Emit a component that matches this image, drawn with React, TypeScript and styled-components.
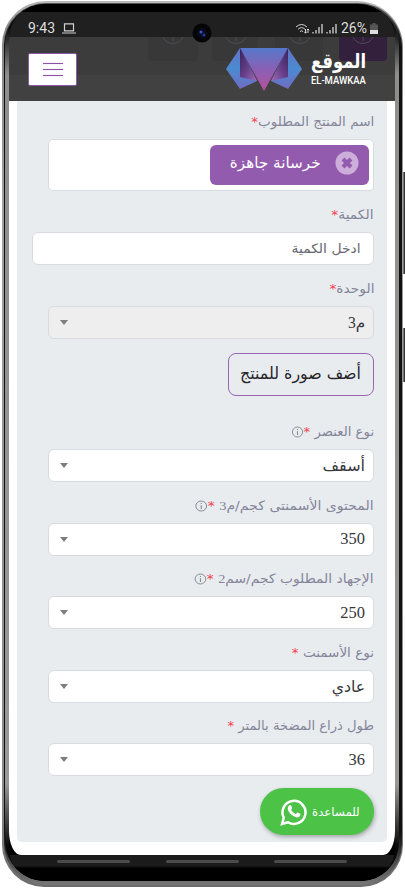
import React from "react";
import styled, { createGlobalStyle } from "styled-components";

const GlobalStyle = createGlobalStyle`
  * { box-sizing: border-box; }
  html, body { margin: 0; background: #fff; }
  body { width: 405px; height: 888px; overflow: hidden; font-family: "DejaVu Sans", sans-serif; }
`;

const Stage = styled.div`
  position: relative;
  width: 405px;
  height: 888px;
  padding: 1px 2px 1px 2px;
  overflow: hidden;
`;
const SideKey = styled.i<{ $top: number; $height: number }>`
  position: absolute;
  right: 0;
  top: ${(p) => p.$top}px;
  width: 3px;
  height: ${(p) => p.$height}px;
  background: #77777a;
  border-right: 1px solid #333;
`;
const Shell = styled.div`
  position: relative;
  height: 886px;
  padding: 2px 1px 2px 2px;
  border-radius: 44px 46px 42px 42px;
  background: linear-gradient(180deg, #b9bab9 0, #858585 30px, #a0a0a0 200px, #888 800px, #6c6c6c 100%);
`;
const Rim = styled.div`
  height: 100%;
  padding: 1px 3px 4px 1px;
  border-radius: 42px 44px 41px 41px;
  background: linear-gradient(180deg, #555 0, #111 40px, #111 830px, #656565 872px, #777 100%);
`;
const Bezel = styled.div`
  height: 100%;
  padding: 0 4px;
  border-radius: 41px 42px 38px 40px;
  background: linear-gradient(180deg, #000 0, #000 20px, #8e8e8c 70px, #999896 780px, #080808 842px);
  overflow: hidden;
`;
const Screen = styled.div`
  display: flex;
  flex-direction: column;
  height: 100%;
  background: #000;
  border-radius: 34px 34px 32px 32px;
  overflow: hidden;
`;

const StatusBar = styled.div`
  display: flex;
  justify-content: space-between;
  align-items: flex-end;
  flex: none;
  height: 33px;
  padding: 0 17px 0 19px;
  border-top: 8px solid #000;
  background: #202020;
  color: #dedede;
  font: 14px/18px Roboto, sans-serif;
  direction: ltr;
`;
const StatusGroup = styled.div<{ $gap: number }>`
  display: flex;
  align-items: center;
  gap: ${(p) => p.$gap}px;
`;
const Camera = styled.svg`
  position: absolute;
  left: 190px;
  top: 21px;
`;
const Header = styled.header`
  position: relative;
  display: flex;
  justify-content: space-between;
  flex: none;
  height: 64px;
  padding: 16px 29px 0 19px;
  background: linear-gradient(#3c3c3c 0 38px, #414141 38px 100%);
  overflow: hidden;
`;
const Ghosts = styled.svg`
  position: absolute;
  left: 0;
  top: 0;
`;
const MenuButton = styled.button`
  position: relative;
  display: flex;
  flex-direction: column;
  align-items: center;
  justify-content: center;
  gap: 5px;
  width: 49px;
  height: 33px;
  padding: 0;
  border: 1px solid #8c59ad;
  border-radius: 2px;
  background: #fff;
`;
const MenuLine = styled.i`
  width: 20px;
  height: 1px;
  background: #8b55a4;
  box-shadow: 0 0 1px #b98ad0;
`;
const Brand = styled.div`
  position: relative;
  display: flex;
  gap: 10px;
  margin-top: -6px;
`;
const BrandText = styled.div`
  display: flex;
  flex-direction: column;
  align-items: flex-end;
  width: 54px;
  color: #fff;
`;
const BrandArabic = styled.div`
  margin-top: 2px;
  font: bold 20px/25px "DejaVu Sans", sans-serif;
  white-space: nowrap;
  transform-origin: right;
  transform: scaleX(0.82);
`;
const BrandLatin = styled.div`
  font: 500 11px/13px Roboto, sans-serif;
  white-space: nowrap;
  direction: ltr;
  transform-origin: right;
  transform: scaleX(0.86);
`;

const Page = styled.main`
  flex: 1;
  padding: 0 8px;
  background: #fff;
  border-radius: 0 0 12px 12px / 0 0 24px 24px;
`;
const Card = styled.form`
  display: flex;
  flex-direction: column;
  align-items: flex-start;
  height: 741px;
  padding: 10px 13px 0 0;
  border-radius: 0 0 5px 5px;
  background: #e8ecef;
  direction: rtl;
`;
const Label = styled.label`
  display: flex;
  align-items: center;
  flex: none;
  height: 22px;
  color: #85859a;
  font-size: 13px;
  line-height: 22px;
  white-space: nowrap;
`;
const Fit = styled.span<{ $x: number }>`
  display: inline-block;
  white-space: nowrap;
  transform-origin: right center;
  transform: scaleX(${(p) => p.$x});
`;
const Digits = styled.span`
  font-family: "Liberation Serif", serif;
  font-size: 1.03em;
`;
const Star = styled.span`
  color: #f4424f;
`;
const Box = styled.div<{ $wide?: boolean; $muted?: boolean; $after: number }>`
  display: flex;
  align-items: center;
  justify-content: space-between;
  flex: none;
  width: ${(p) => (p.$wide ? 342 : 326)}px;
  height: 33px;
  margin: 6px 0 ${(p) => p.$after}px;
  padding: 0 ${(p) => (p.$wide ? 12 : 8)}px 0 11px;
  border: 1px solid #d8dbe0;
  border-radius: 6px;
  background: ${(p) => (p.$muted ? "#eeeeee" : "#fff")};
  color: #36363c;
  font-size: 16px;
`;
const TagBox = styled(Box)`
  height: 52px;
  padding: 0 4px 0 0;
  border-radius: 5px;
`;
const Tag = styled.div`
  display: flex;
  align-items: center;
  gap: 14px;
  width: 159px;
  height: 40px;
  margin-bottom: 1px;
  padding: 0 10px 4px 0;
  border-radius: 6px;
  background: #925bae;
  color: #fff;
  font-size: 15.5px;
`;
const Placeholder = styled.span`
  color: #66666c;
  font-size: 13px;
`;
const Caret = styled.i`
  border: 4px solid transparent;
  border-top: 5px solid #7d7d7d;
  border-bottom: 0;
`;
const PhotoButton = styled.button`
  display: flex;
  align-items: center;
  flex: none;
  width: 146px;
  height: 43px;
  margin-bottom: 25px;
  padding: 0 12px 2px 0;
  border: 1px solid #9a66b1;
  border-radius: 8px;
  background: transparent;
  color: #25252a;
  font: 16.5px "DejaVu Sans", sans-serif;
`;
const Help = styled.button`
  display: flex;
  align-items: center;
  justify-content: space-between;
  flex: none;
  width: 114px;
  height: 47px;
  padding: 0 14px 0 20px;
  border: 0;
  border-radius: 24px;
  background: #4cc247;
  box-shadow: 1px 2px 4px #5557;
  color: #fff;
  font: 12px "DejaVu Sans", sans-serif;
`;
const NavBar = styled.footer`
  display: flex;
  justify-content: space-between;
  flex: none;
  height: 26px;
  padding: 5px 48px 0;
  background: linear-gradient(#1b1b1b 0 11px, #000 13px);
`;
const NavPill = styled.i`
  width: 73px;
  height: 3px;
  border-radius: 2px;
  background: #4b4b4b;
`;
const InfoMark = styled.svg`
  vertical-align: -2px;
`;

const InfoIcon = () => (
  <InfoMark width="12" height="12" viewBox="0 0 12 12" fill="none" stroke="#85858f">
    <circle cx="6" cy="6" r="5" strokeWidth=".9" />
    <path d="M6 5.2V9M6 3v1.1" strokeWidth="1" />
  </InfoMark>
);

const Logo = () => (
  <svg width="76" height="45" viewBox="0 0 76 45">
    <defs>
      <linearGradient id="mid" x1="0" y1="0" x2="0" y2="1">
        <stop offset="0" stopColor="#5579cb" />
        <stop offset=".5" stopColor="#8a5fb4" />
        <stop offset="1" stopColor="#b5539a" />
      </linearGradient>
      <linearGradient id="side" x1="0" y1="0" x2="0" y2="1">
        <stop offset="0" stopColor="#6471c2" />
        <stop offset=".5" stopColor="#4b8bd2" />
        <stop offset="1" stopColor="#716bc1" />
      </linearGradient>
      <linearGradient id="foldLeft" x1="0" y1="0" x2="1" y2="1">
        <stop offset="0" stopColor="#35225f" />
        <stop offset=".5" stopColor="#643d86" />
        <stop offset="1" stopColor="#a568bc" />
      </linearGradient>
      <linearGradient id="foldRight" x1="1" y1="0" x2="0" y2="1">
        <stop offset="0" stopColor="#35225f" />
        <stop offset=".5" stopColor="#643d86" />
        <stop offset="1" stopColor="#a568bc" />
      </linearGradient>
    </defs>
    <path d="M14 1 0 22l14 20 17-8Z" fill="url(#side)" />
    <path d="M62 1 76 22 62 42l-17-8Z" fill="url(#side)" />
    <path d="M14 1h48L38 44Z" fill="url(#mid)" />
    <path d="M14 1v29l17 4Z" fill="url(#foldLeft)" />
    <path d="M62 1v29l-17 4Z" fill="url(#foldRight)" />
  </svg>
);

interface SelectProps {
  label: React.ReactNode;
  labelScale: number;
  value: React.ReactNode;
  valueScale?: number;
  info?: boolean;
  muted?: boolean;
  after: number;
}

const SelectField = ({ label, labelScale, value, valueScale = 1, info, muted, after }: SelectProps) => (
  <>
    <Label>
      <Fit $x={labelScale}>
        {label}
        <Star>*</Star>
        {info && <InfoIcon />}
      </Fit>
    </Label>
    <Box $muted={muted} $after={after}>
      <Fit $x={valueScale}>{value}</Fit>
      <Caret />
    </Box>
  </>
);

export default function App() {
  return (
    <>
      <GlobalStyle />
      <Stage>
        <SideKey $top={172} $height={102} />
        <SideKey $top={328} $height={54} />
        <Shell>
          <Rim>
            <Bezel>
              <Screen>
                <StatusBar>
                  <StatusGroup $gap={7}>
                    <span>9:43</span>
                    <svg width="14" height="11" viewBox="0 0 14 11" fill="none" stroke="#cfcfcf">
                      <path d="M2.5.8h9v7h-9zM0 10h14" strokeWidth="1.2" />
                    </svg>
                  </StatusGroup>
                  <StatusGroup $gap={3}>
                    <svg width="43" height="13" viewBox="0 0 43 13" fill="none" stroke="#d5d5d5">
                      <path d="M1 5Q6.500 0 12 5M3 7.300Q6.500 4 10 7.300M5 9.500Q6.500 8 8 9.500M10.500 7v4m-1.200-1.200 1.200 1.400 1.200-1.400M13 11V7m-1.200 1.200L13 7l1.200 1.200" />
                      <path d="M18 10v1.500M21 8v3.500M24 5v6.500M27 2v9.500M32 10v1.500M35 8v3.500M38 5v6.500M41 2v9.500" strokeWidth="1.300" />
                    </svg>
                    <span>26%</span>
                    <svg width="8" height="11" viewBox="0 0 8 11">
                      <path d="M0 1.500h2.500V0h3v1.500H8V7H0Z" fill="#555" />
                      <path d="M0 7h8v4H0Z" fill="#ddd" />
                    </svg>
                  </StatusGroup>
                </StatusBar>
                <Header>
                  <Ghosts width="386" height="64" viewBox="0 0 386 64" fill="none">
                    <path d="M139 0h50v20q0 4-4 4h-42q-4 0-4-4zM203 0h46v20q0 4-4 4h-38q-4 0-4-4zM266 0h48v20q0 4-4 4h-40q-4 0-4-4z" fill="#383838" />
                    <path d="M330 0h48v20q0 4-4 4h-40q-4 0-4-4z" fill="#32203c" />
                    <path d="M154 0a11 11 0 0 0 20 0M217 0a11 11 0 0 0 20 0M281 0a11 11 0 0 0 20 0M344 0a11 11 0 0 0 20 0M164 0v4M227 0v4M291 0v4M354 0v4" stroke="#504c53" />
                  </Ghosts>
                  <MenuButton aria-label="القائمة">
                    <MenuLine />
                    <MenuLine />
                    <MenuLine />
                  </MenuButton>
                  <Brand>
                    <Logo />
                    <BrandText>
                      <BrandArabic>الموقع</BrandArabic>
                      <BrandLatin>EL-MAWKAA</BrandLatin>
                    </BrandText>
                  </Brand>
                </Header>
                <Page>
                  <Card>
                    <Label>
                      <Fit $x={1.04}>
                        اسم المنتج المطلوب<Star>*</Star>
                      </Fit>
                    </Label>
                    <TagBox $after={13}>
                      <Tag>
                        <svg width="24" height="24" viewBox="0 0 24 24">
                          <circle cx="12" cy="12" r="11.500" fill="#cdaedb" />
                          <path d="m8 8 8 8m0-8-8 8" stroke="#925bae" strokeWidth="4" />
                        </svg>
                        <Fit $x={0.98}>خرسانة جاهزة</Fit>
                      </Tag>
                    </TagBox>
                    <Label>
                      <Fit $x={1.07}>
                        الكمية<Star>*</Star>
                      </Fit>
                    </Label>
                    <Box $wide $after={13}>
                      <Placeholder>
                        <Fit $x={1.07}>ادخل الكمية</Fit>
                      </Placeholder>
                    </Box>
                    <SelectField label="الوحدة" labelScale={1.06} value={<>م<Digits>3</Digits></>} valueScale={0.95} muted after={14} />
                    <PhotoButton type="button">
                      <Fit $x={0.96}>أضف صورة للمنتج</Fit>
                    </PhotoButton>
                    <SelectField label="نوع العنصر " labelScale={1.02} value="أسقف" info after={12.5} />
                    <SelectField label={<>المحتوى الأسمنتى كجم/م<Digits>3</Digits> </>} labelScale={1.08} value={<Digits>350</Digits>} info after={12.5} />
                    <SelectField label={<>الإجهاد المطلوب كجم/سم<Digits>2</Digits> </>} labelScale={1.065} value={<Digits>250</Digits>} info after={12.5} />
                    <SelectField label="نوع الأسمنت " labelScale={1.04} value="عادي" valueScale={0.98} after={12.5} />
                    <SelectField label="طول ذراع المضخة بالمتر " labelScale={1.01} value={<Digits>36</Digits>} after={12} />
                    <Help type="button">
                      <Fit $x={0.98}>للمساعدة</Fit>
                      <svg width="28" height="28" viewBox="0 0 28 28" fill="none">
                        <path d="m2 26 1.800-6.300A11.500 11.500 0 1 1 8 24.200Z" stroke="#fff" strokeWidth="2.500" />
                        <path d="M9.300 7.500c.8-.8 1.700-.5 2 .2l.9 2.200c.2.600-.8 1.500-1 1.900.9 2 2.500 3.400 4.500 4.200.6-.2 1.400-1.700 2-1.500l2.500 1.200c.8.500-.1 2.500-.9 3.100-2.200 1.600-5.600-.1-8-2.200-2.500-2.400-5.400-6.400-2-9.100Z" fill="#fff" />
                      </svg>
                    </Help>
                  </Card>
                </Page>
                <NavBar>
                  <NavPill />
                  <NavPill />
                  <NavPill />
                </NavBar>
              </Screen>
            </Bezel>
          </Rim>
        </Shell>
        <Camera width="24" height="24" viewBox="0 0 24 24">
          <circle cx="12" cy="12" r="9.500" fill="#050505" />
          <circle cx="12" cy="12" r="5" fill="#080b20" />
          <circle cx="11" cy="11" r="1.500" fill="#3457c5" />
          <circle cx="14" cy="14" r="1.500" fill="#243b91" />
        </Camera>
      </Stage>
    </>
  );
}
